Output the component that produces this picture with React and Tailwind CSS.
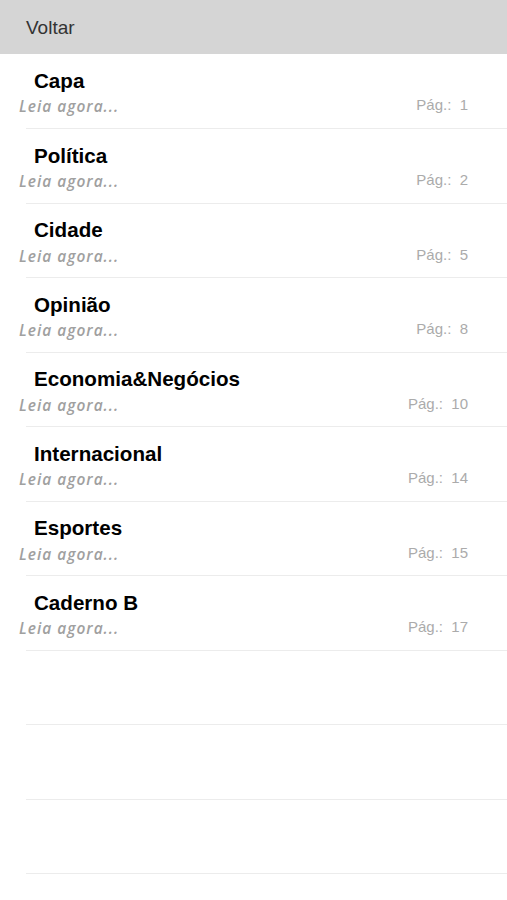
import React from "react";

const items = [
  { t: "Capa", p: 1 },
  { t: "Política", p: 2 },
  { t: "Cidade", p: 5 },
  { t: "Opinião", p: 8 },
  { t: "Economia&Negócios", p: 10 },
  { t: "Internacional", p: 14 },
  { t: "Esportes", p: 15 },
  { t: "Caderno B", p: 17 },
];

export default function App() {
  return (
    <div className="w-[507px] h-[900px] bg-white overflow-hidden font-['Liberation_Sans',Arial,sans-serif]">
      <div className="h-[54px] bg-[#d5d5d5] flex items-center pl-[26px]">
        <span className="text-[19px] text-[#333333] leading-none">Voltar</span>
      </div>
      <div className="flex flex-col">
        {items.map((it, i) => (
          <div key={i} className={`${i === 0 ? "h-[75px]" : "h-[74.5px]"} flex flex-col`}>
            <div className={`${i === 0 ? "pt-[15px]" : "pt-[14.5px]"} pl-[34px] h-[39px] flex items-center`}>
              <span className="text-[20.6px] font-bold text-black leading-[24px]">{it.t}</span>
            </div>
            <div className="flex items-center justify-between h-[20px] mt-[4px]">
              <span className="pl-[19px] font-['Open_Sans',sans-serif] italic font-semibold text-[15.5px] text-[#a0a0a0] tracking-[1px]">
                Leia agora...
              </span>
              <span className="pr-[39px] text-[15px] text-[#ababab] -mt-[3px] whitespace-pre">
                {"Pág.:  " + it.p}
              </span>
            </div>
            <div className="flex-1" />
            <div className="ml-[26px] h-px bg-[#ececec]" />
          </div>
        ))}
        {[0, 1, 2].map((i) => (
          <div key={"e" + i} className="h-[74.5px] flex flex-col justify-end">
            <div className="ml-[26px] h-px bg-[#ececec]" />
          </div>
        ))}
      </div>
    </div>
  );
}
